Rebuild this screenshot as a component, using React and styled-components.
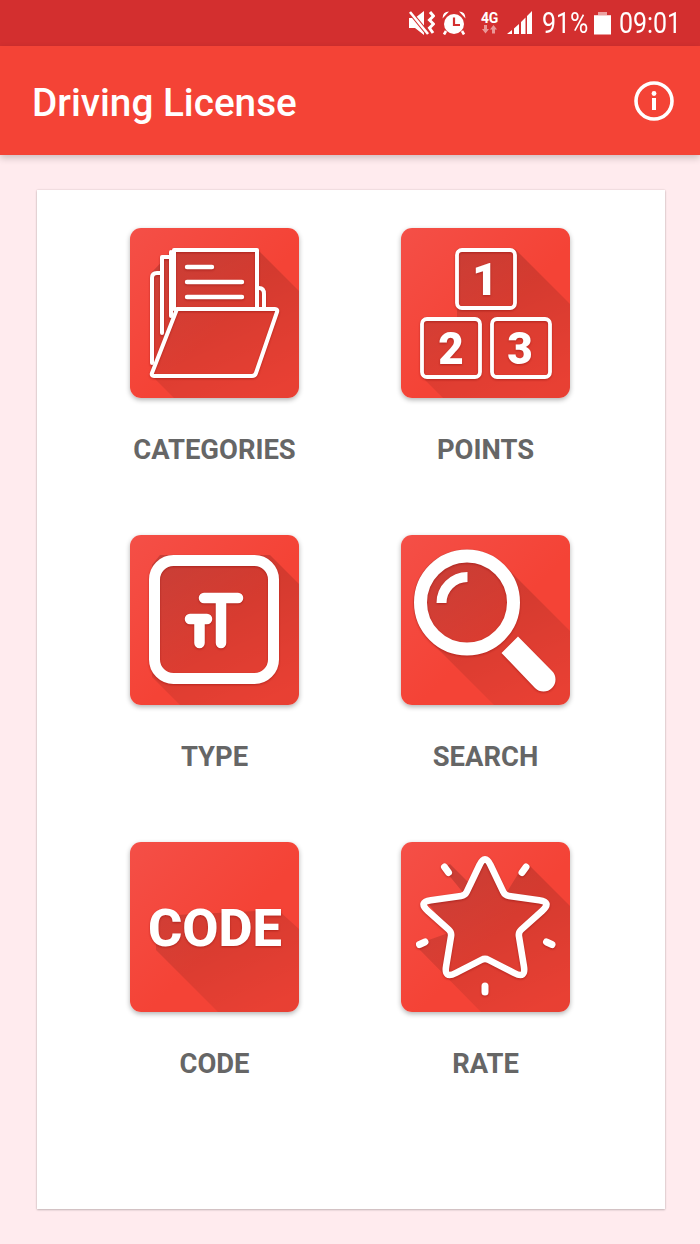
import React from 'react';
import styled, { createGlobalStyle } from 'styled-components';

const GlobalStyle = createGlobalStyle`
  html, body {
    margin: 0;
    padding: 0;
    background: #ffebee;
    font-family: Roboto, "Liberation Sans", sans-serif;
  }
`;

const Page = styled.div`
  width: 700px;
  height: 1244px;
  display: flex;
  flex-direction: column;
  overflow: hidden;
  background: #ffebee;
`;

const StatusBar = styled.div`
  height: 46px;
  flex: none;
  background: #d32f2f;
  display: flex;
  align-items: center;
  justify-content: flex-end;
  padding: 0 21px 0 0;
  color: #fff;
`;

const StatusIcon = styled.svg`
  display: block;
  flex: none;
  margin-left: ${(p) => p.$gap}px;
  fill: #fff;
`;

const NetworkBox = styled.div`
  display: flex;
  flex-direction: column;
  align-items: center;
  margin-left: 14px;
  width: 19px;
`;

const NetworkLabel = styled.span`
  font-size: 14px;
  line-height: 13px;
  font-weight: 700;
  letter-spacing: -0.3px;
`;

const StatusText = styled.span`
  display: block;
  flex: none;
  width: ${(p) => p.$width}px;
  margin-left: ${(p) => p.$gap}px;
  font-size: 29px;
  line-height: 34px;
  font-weight: 400;
  white-space: nowrap;
  transform: scaleX(0.86);
  transform-origin: left center;
`;

const AppBar = styled.header`
  height: 109px;
  flex: none;
  box-sizing: border-box;
  background: #f44336;
  box-shadow: 0 3px 7px rgba(0, 0, 0, 0.2);
  display: flex;
  align-items: center;
  justify-content: space-between;
  padding: 0 25px 0 32px;
  position: relative;
  z-index: 1;
`;

const Title = styled.h1`
  margin: 5px 0 0;
  color: #fff;
  font-size: 38.7px;
  line-height: 46px;
  font-weight: 500;
`;

const Card = styled.main`
  margin: 35px 35px 0 37px;
  height: 1019px;
  box-sizing: border-box;
  background: #fff;
  box-shadow: 0 1px 2px rgba(0, 0, 0, 0.2), 0 0 2px rgba(0, 0, 0, 0.14);
  padding: 38px 44px 0 42px;
  display: grid;
  grid-template-columns: 271px 271px;
  grid-auto-rows: 237px;
  row-gap: 70px;
`;

const Item = styled.div`
  display: flex;
  flex-direction: column;
  align-items: center;
`;

const TileBox = styled.div`
  width: 169px;
  height: 170px;
  flex: none;
  border-radius: 11px;
  overflow: hidden;
  box-shadow: 0 2px 5px rgba(0, 0, 0, 0.3);
`;

const TileSvg = styled.svg`
  display: block;
`;

const Glyph = styled.g`
  filter: drop-shadow(0 1px 1px rgba(120, 0, 0, 0.4));
`;

const Label = styled.div`
  margin-top: 37px;
  color: #666;
  font-size: 27.4px;
  line-height: 30px;
  font-weight: 700;
`;

const TileText = styled.text`
  font-family: Roboto, "Liberation Sans", sans-serif;
  font-weight: ${(p) => p.$weight || 700};
  font-size: ${(p) => p.$size}px;
  fill: #fff;
  text-anchor: middle;
`;

const line = { stroke: '#fff', fill: 'none', strokeLinecap: 'round', strokeLinejoin: 'round' };

const Tile = ({ id, shadow, children }) => (
  <TileBox>
    <TileSvg width="170" height="170" viewBox="0 0 170 170">
      <defs>
        <linearGradient id={`bg-${id}`} x1="0" y1="0" x2="1" y2="1">
          <stop offset="0" stopColor="#f44f47" />
          <stop offset="0.55" stopColor="#f44336" />
        </linearGradient>
        <linearGradient id={`sh-${id}`} gradientUnits="userSpaceOnUse" x1="60" y1="25" x2="125" y2="170">
          <stop offset="0" stopColor="#000" stopOpacity="0.17" />
          <stop offset="1" stopColor="#000" stopOpacity="0.05" />
        </linearGradient>
      </defs>
      <rect width="170" height="170" fill={`url(#bg-${id})`} />
      <path d={shadow} fill={`url(#sh-${id})`} />
      <Glyph>{children}</Glyph>
    </TileSvg>
  </TileBox>
);

const FolderIcon = () => (
  <Tile id="folder" shadow="M43 22H128L170 64V170H44L21 147V45Z">
    <g {...line} strokeWidth="4">
      <path d="M22 135V50Q22 45 27 45H32" />
      <path d="M32 105V29H41" />
      <path d="M41 88V24" />
      <path d="M44 81V22H127V79" />
      <path d="M128 60H129Q134 60 134 66V80" />
      <path d="M47 81H145Q148 81 147 84L126 145Q125 148 122 148H24Q21 148 22 145Z" />
      <path d="M57 39H82M57 54H112M57 69H112" strokeWidth="4.4" />
    </g>
  </Tile>
);

const PointsIcon = () => (
  <Tile id="points" shadow="M56 21H114L170 77V170H42L21 149V90H56Z">
    <g {...line} strokeWidth="3.8">
      <rect x="56" y="22" width="58" height="58" rx="5" />
      <rect x="21" y="91" width="58" height="58" rx="5" />
      <rect x="91" y="91" width="58" height="58" rx="5" />
    </g>
    <TileText x="84" y="67" $size="44" $weight="900">1</TileText>
    <TileText x="50" y="136" $size="44" $weight="900">2</TileText>
    <TileText x="119" y="136" $size="44" $weight="900">3</TileText>
  </Tile>
);

const TypeIcon = () => (
  <Tile id="type" shadow="M30 20H140L170 50V170H50L22 142V30Z">
    <rect x="24.5" y="25.5" width="119" height="118" rx="19" fill="none" stroke="#fff" strokeWidth="11" />
    <g {...line} strokeWidth="10.5">
      <path d="M74 63H108M91 63V108" />
      <path d="M60 84H77M69.5 84V108" />
    </g>
  </Tile>
);

const SearchIcon = () => (
  <Tile id="search" shadow="M103 30L170 97V170H93L28 105A53 53 0 1 1 103 30Z">
    <circle cx="66" cy="67.5" r="46.5" fill="none" stroke="#fff" strokeWidth="13" />
    <path d="M40.5 68A26 26 0 0 1 66.5 42" fill="none" stroke="#fff" strokeWidth="10" />
    <path d="M117 101.5L100.5 118L134 153A11.5 11.5 0 0 0 151 136Z" fill="#fff" />
  </Tile>
);

const CodeIcon = () => (
  <Tile id="code" shadow="M26 74L148 68L170 88V170H88L26 108Z">
    <TileText x="85" y="104" $size="52.5" $weight="800">CODE</TileText>
  </Tile>
);

const starPoints = [
  [84, 11.5, 13], [104, 53.5, 4], [151, 60, 13], [117.3, 90.3, 4], [125, 137, 13],
  [84, 116, 4], [43, 137, 13], [50.7, 90.3, 4], [17, 60, 13], [64, 53.5, 4],
];

// rounds each corner of the star with a quadratic curve
const starPath = () => {
  const n = starPoints.length;
  const toward = (a, b, r) => {
    const len = Math.hypot(b[0] - a[0], b[1] - a[1]);
    return [a[0] + ((b[0] - a[0]) * r) / len, a[1] + ((b[1] - a[1]) * r) / len];
  };
  let d = '';
  starPoints.forEach((p, i) => {
    const a = toward(p, starPoints[(i + n - 1) % n], p[2]);
    const b = toward(p, starPoints[(i + 1) % n], p[2]);
    d += `${i === 0 ? 'M' : 'L'}${a[0]} ${a[1]}Q${p[0]} ${p[1]} ${b[0]} ${b[1]}`;
  });
  return `${d}Z`;
};

const RateIcon = () => (
  <Tile
    id="rate"
    shadow="M16 105L25 99L50 90L26 60L64 53L42 26L49 22L72 45L84 18L104 53L122 24L129 24L170 65V170H80Z"
  >
    <path d={starPath()} fill="none" stroke="#fff" strokeWidth="6.6" strokeLinejoin="round" />
    <g {...line} strokeWidth="7">
      <path d="M43.5 25L47.5 30.5M125 25L121 30.5M18.5 102.5L24 100M145.5 100L151 102.5M84 144V150" />
    </g>
  </Tile>
);

const tiles = [
  { label: 'CATEGORIES', Icon: FolderIcon },
  { label: 'POINTS', Icon: PointsIcon },
  { label: 'TYPE', Icon: TypeIcon },
  { label: 'SEARCH', Icon: SearchIcon },
  { label: 'CODE', Icon: CodeIcon },
  { label: 'RATE', Icon: RateIcon },
];

const MuteIcon = () => (
  <StatusIcon $gap={0} width="26" height="24" viewBox="0 0 26 24">
    <path d="M0 7H6L15 0V24L6 17H0Z" />
    <path d="M1 1L19 23" stroke="#d32f2f" strokeWidth="4.5" />
    <path d="M1 1L19 23" stroke="#fff" strokeWidth="2.6" />
    <path d="M21 1L24.5 5L20.5 9L24.5 13L20.5 17L24 22" fill="none" stroke="#fff" strokeWidth="3" />
  </StatusIcon>
);

const AlarmIcon = () => (
  <StatusIcon $gap={7} width="24" height="24" viewBox="0 0 24 24">
    <path d="M0.5 7.5Q0.5 0.5 7 0.5Z M23.5 7.5Q23.5 0.5 17 0.5Z" />
    <circle cx="12" cy="13" r="10" />
    <path d="M4 20L2 23.5M20 20L22 23.5" stroke="#fff" strokeWidth="2.6" />
    <path d="M12 6.5V14H18" fill="none" stroke="#d32f2f" strokeWidth="2.2" />
  </StatusIcon>
);

const SignalIcon = () => (
  <StatusIcon $gap={8} width="25" height="24" viewBox="0 0 25 24">
    <path d="M0 23L5 19V23Z M7 17.5L12 13V23H7Z M14 11L18.5 6.5V23H14Z M20 5L25 0V23H20Z" />
  </StatusIcon>
);

const BatteryIcon = () => (
  <StatusIcon $gap={0} width="17" height="24" viewBox="0 0 17 24">
    <path d="M4 1H13V4H17V7H0V4H4Z" opacity="0.55" />
    <rect y="4.5" width="17" height="19" />
  </StatusIcon>
);

const App = () => (
  <Page>
    <GlobalStyle />
    <StatusBar>
      <MuteIcon />
      <AlarmIcon />
      <NetworkBox>
        <NetworkLabel>4G</NetworkLabel>
        <svg width="15" height="9" viewBox="0 0 15 9" fill="#fff" opacity="0.5">
          <path d="M2 0H5V4H7L3.5 8.5L0 4H2Z M10 8.5H13V4.5H15L11.5 0L8 4.5H10Z" />
        </svg>
      </NetworkBox>
      <SignalIcon />
      <StatusText $gap={10} $width={52}>91%</StatusText>
      <BatteryIcon />
      <StatusText $gap={8} $width={60}>09:01</StatusText>
    </StatusBar>
    <AppBar>
      <Title>Driving License</Title>
      <svg width="42" height="42" viewBox="0 0 42 42">
        <circle cx="21" cy="21" r="18" fill="none" stroke="#fff" strokeWidth="3.6" />
        <rect x="19" y="18" width="4" height="12" fill="#fff" />
        <circle cx="21" cy="13.5" r="2.4" fill="#fff" />
      </svg>
    </AppBar>
    <Card>
      {tiles.map(({ label, Icon }) => (
        <Item key={label}>
          <Icon />
          <Label>{label}</Label>
        </Item>
      ))}
    </Card>
  </Page>
);

export default App;
